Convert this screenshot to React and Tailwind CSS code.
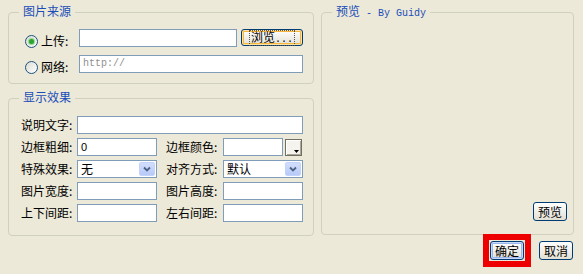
import React from "react";

const CJK = "font-['Noto_Sans_CJK_SC','Liberation_Sans',sans-serif]";

function Fieldset({ legend, className, children }) {
  return (
    <div className={`border border-[#D0D0BF] rounded-[4px] flex flex-col ${className}`}>
      <span className="-mt-[9px] self-start bg-[#ECE9D8] text-[#1A4DB8] leading-[14px] px-[4px] ml-[10px] whitespace-pre">
        {legend}
      </span>
      {children}
    </div>
  );
}

function Radio({ checked }) {
  return (
    <div className="w-[13px] h-[13px] rounded-full border border-[#1C5180] bg-linear-to-br from-[#DCDBD3] to-white flex items-center justify-center">
      {checked && <div className="w-[5px] h-[5px] rounded-full bg-[#2FA32F] shadow-[0_0_1px_1px_#8BD68B]" />}
    </div>
  );
}

function Input({ w, children, muted }) {
  return (
    <div
      className={`h-[18px] border border-[#7F9DB9] bg-white flex items-center pl-[3px] ${muted ? "text-[#8F8F8F]" : "text-black"}`}
      style={{ width: w }}
    >
      {children}
    </div>
  );
}

function Select({ value }) {
  return (
    <div className="w-[80px] h-[18px] border border-[#7F9DB9] bg-white flex items-center justify-between pl-[3px] pr-[1px]">
      <span className="leading-[14px]">{value}</span>
      <div className="w-[16px] h-[14px] rounded-[2px] bg-linear-to-b from-[#D2DEFC] to-[#B7CAF7] border border-[#C3D3FD] flex items-center justify-center">
        <svg width="8" height="6" viewBox="0 0 8 6">
          <path d="M1 1.5 L4 4.5 L7 1.5" stroke="#4D6185" strokeWidth="1.8" fill="none" />
        </svg>
      </div>
    </div>
  );
}

function Button({ children, w = 34, h = 19, variant }) {
  let extra = "";
  if (variant === "focus") extra = "shadow-[inset_0_0_0_1px_#C9D9F7,inset_0_0_0_2px_#9AB6EE]";
  if (variant === "hover") extra = "shadow-[inset_0_0_0_1px_#FCE3A6,inset_0_0_0_2px_#F5B63B]";
  return (
    <div
      className={`rounded-[3px] border border-[#003C74] bg-linear-to-b from-white to-[#E2DFD3] flex items-center justify-center leading-[14px] text-black ${extra}`}
      style={{ width: w, height: h }}
    >
      {children}
    </div>
  );
}

function Label({ w, children }) {
  return (
    <span className="leading-[14px] whitespace-pre shrink-0" style={{ width: w }}>
      {children}
    </span>
  );
}

export default function App() {
  return (
    <div className={`w-[583px] h-[274px] bg-[#ECE9D8] pl-[8px] pr-[9px] pt-[12px] text-[12px] leading-[14px] text-black overflow-hidden ${CJK}`}>
      <div className="flex gap-[7px]">
        <div className="w-[306px] flex flex-col">
          <Fieldset legend="图片来源" className="h-[72px]">
            <div className="flex items-start mt-[11px] pl-[16px]">
              <div className="w-[54px] flex items-center gap-[3px] mt-[5px]">
                <Radio checked />
                <span className="leading-[14px]">上传:</span>
              </div>
              <Input w={158} />
              <div className="ml-[4px]">
                <Button w={62} h={17} variant="hover">
                  <span className="border border-dotted border-[#555] px-[1px] leading-[11px]">
                    浏览<span className="font-['Liberation_Mono',monospace] text-[10px]">...</span>
                  </span>
                </Button>
              </div>
            </div>
            <div className="flex items-start mt-[7px] pl-[16px]">
              <div className="w-[54px] flex items-center gap-[3px] mt-[5px]">
                <Radio />
                <span className="leading-[14px]">网络:</span>
              </div>
              <Input w={224} muted>
                <span className="font-['Liberation_Mono',monospace] text-[10px]">http://</span>
              </Input>
            </div>
          </Fieldset>

          <Fieldset legend="显示效果" className="mt-[14px] h-[138px]">
            <div className="flex flex-col gap-[4px] mt-[12px] pl-[12px]">
              <div className="flex items-center">
                <Label w={56}>说明文字:</Label>
                <Input w={226} />
              </div>
              <div className="flex items-center">
                <Label w={56}>边框粗细:</Label>
                <Input w={80}>
                  <span className="font-['Liberation_Sans',sans-serif] text-[11px]">0</span>
                </Input>
                <span className="w-[9px]" />
                <Label w={57}>边框颜色:</Label>
                <Input w={60} />
                <div className="ml-[2px] w-[17px] h-[17px] border border-[#716F64] bg-[#F4F3EE] shadow-[inset_1px_1px_0_#FFFFFF,inset_-1px_-1px_0_#ACA899] flex items-end justify-end p-[2px]">
                  <svg width="5" height="3" viewBox="0 0 5 3">
                    <path d="M0 0 H5 L2.5 3 Z" fill="#000" />
                  </svg>
                </div>
              </div>
              <div className="flex items-center">
                <Label w={56}>特殊效果:</Label>
                <Select value="无" />
                <span className="w-[9px]" />
                <Label w={57}>对齐方式:</Label>
                <Select value="默认" />
              </div>
              <div className="flex items-center">
                <Label w={56}>图片宽度:</Label>
                <Input w={80} />
                <span className="w-[9px]" />
                <Label w={57}>图片高度:</Label>
                <Input w={80} />
              </div>
              <div className="flex items-center">
                <Label w={56}>上下间距:</Label>
                <Input w={80} />
                <span className="w-[9px]" />
                <Label w={57}>左右间距:</Label>
                <Input w={80} />
              </div>
            </div>
          </Fieldset>
        </div>

        <Fieldset
          legend={
            <>
              预览<span className="font-['Liberation_Mono',monospace] text-[10px]"> - By Guidy</span>
            </>
          }
          className="w-[253px] h-[223px]"
        >
          <div className="flex-1" />
          <div className="self-end mr-[6px] mb-[13px]">
            <Button w={34} h={19}>预览</Button>
          </div>
        </Fieldset>
      </div>

      <div className="flex justify-end items-center -mt-[2px] pr-[1px]">
        <div className="border-[6px] border-[#EE0000] p-[1px]">
          <Button w={34} h={19} variant="focus">确定</Button>
        </div>
        <div className="ml-[8px]">
          <Button w={34} h={19}>取消</Button>
        </div>
      </div>
    </div>
  );
}
